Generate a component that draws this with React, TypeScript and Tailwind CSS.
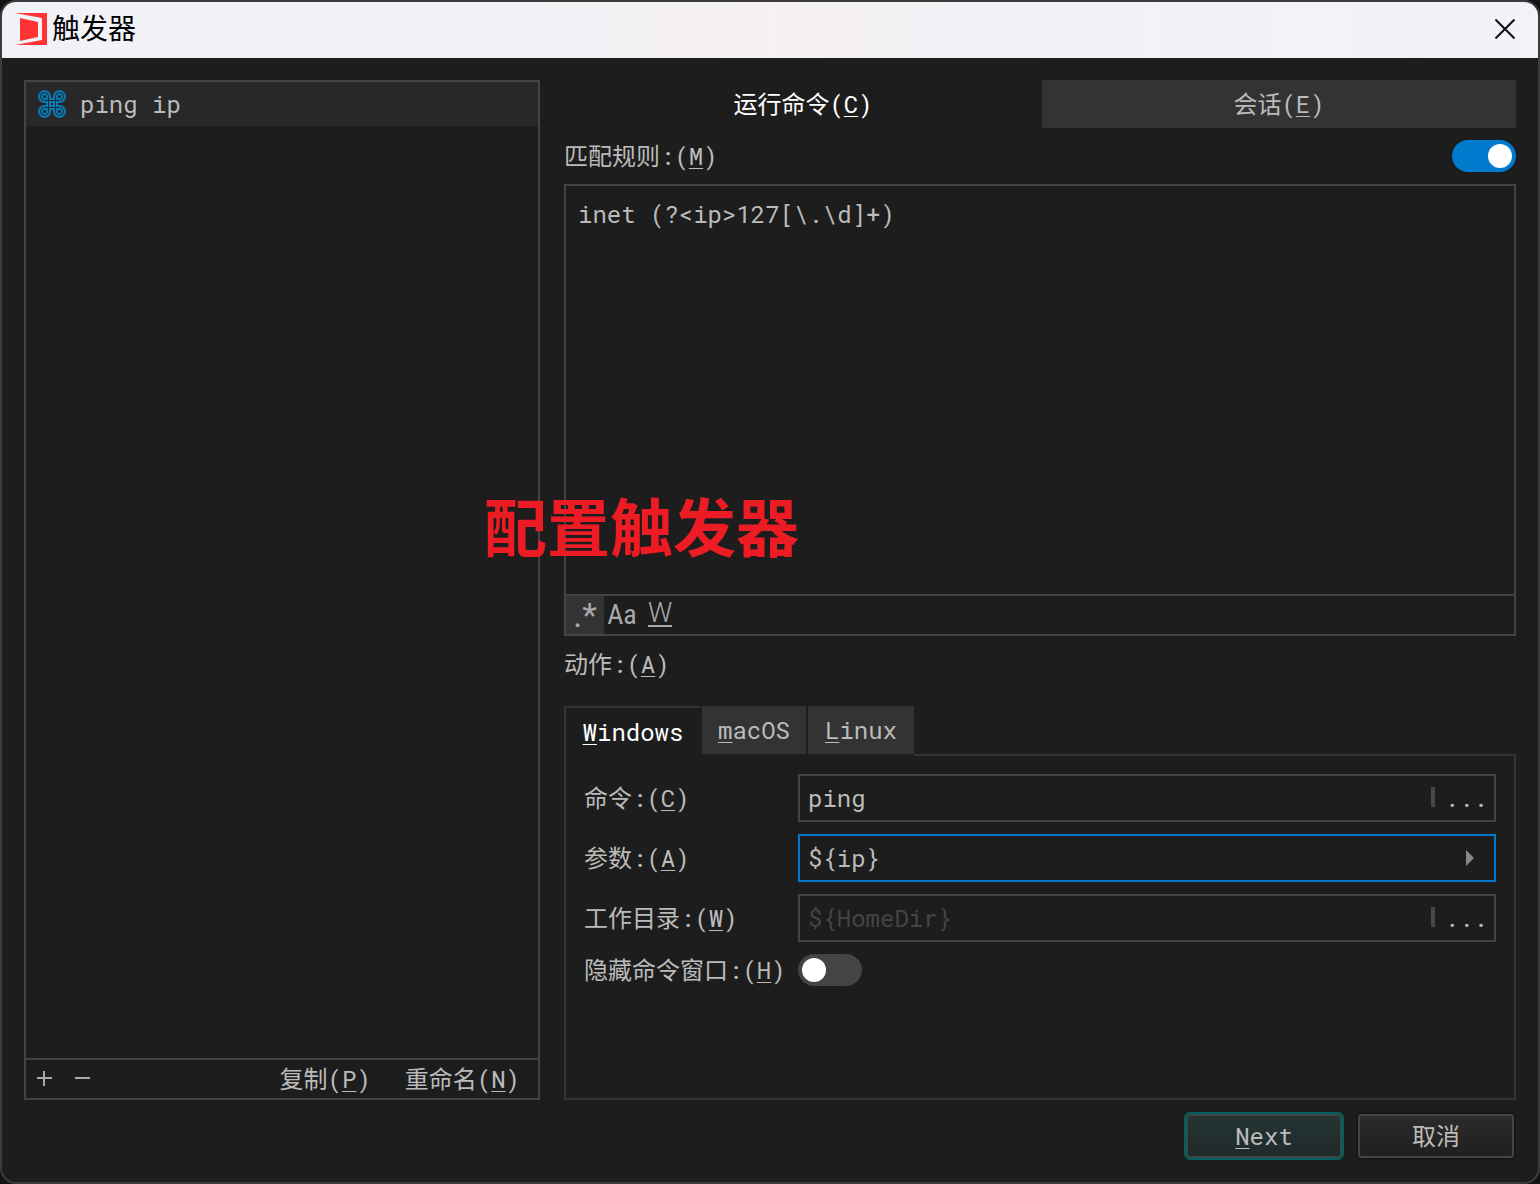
import React, { useState } from "react";
import clsx from "clsx";

const MONO = "font-['Roboto_Mono','Liberation_Mono','Noto_Sans_CJK_SC',monospace]";

const platforms = [
	{ id: "windows", hotkey: "W", rest: "indows", width: "w-[136px]" },
	{ id: "macos", hotkey: "m", rest: "acOS", width: "w-[104px]" },
	{ id: "linux", hotkey: "L", rest: "inux", width: "w-[106px]" },
];

const Hotkey = ({ children }: { children: string }) => (
	<span className="underline decoration-1 underline-offset-3">{children}</span>
);

const Label = ({ text, hotkey, htmlFor }: { text: string; hotkey: string; htmlFor: string }) => (
	<label htmlFor={htmlFor} className="whitespace-nowrap">
		{text}:(<Hotkey>{hotkey}</Hotkey>)
	</label>
);

const Logo = () => (
	<svg width="32" height="32" viewBox="0 0 32 32" aria-hidden="true">
		<path d="M0 0H32V32H0L27 27V5Z" fill="#ff3333" />
		<path d="M5 5L23 9V24L5 28Z" fill="#ff3333" />
	</svg>
);

const LOOPS =
	"M10.500 10.500H6.500A4 4 0 1 1 10.500 6.500V21.500A4 4 0 1 1 6.500 17.500H21.500A4 4 0 1 1 17.500 21.500V6.500A4 4 0 1 1 21.500 10.500Z";

const CommandIcon = () => (
	<svg width="28" height="28" viewBox="0 0 28 28" fill="none" aria-hidden="true">
		<path d={LOOPS} stroke="#047ab8" strokeWidth="5" />
		<path d={LOOPS} stroke="#282828" strokeWidth="1" />
	</svg>
);

const Toggle = ({
	id,
	label,
	checked,
	onChange,
}: {
	id: string;
	label?: string;
	checked: boolean;
	onChange: (value: boolean) => void;
}) => (
	<input
		id={id}
		type="checkbox"
		role="switch"
		aria-label={label}
		checked={checked}
		onChange={(e) => onChange(e.target.checked)}
		className="flex h-8 w-16 shrink-0 appearance-none items-center rounded-full bg-[#444] px-1 before:size-6 before:rounded-full before:bg-white before:content-[''] checked:justify-end checked:bg-[#007acc]"
	/>
);

const BrowseButton = ({ label }: { label: string }) => (
	<>
		<span className="mb-[2px] h-5 w-1 shrink-0 bg-[#484848]" />
		<button type="button" aria-label={label} className="pr-[6px] pl-[10px] leading-8">
			...
		</button>
	</>
);

const fieldBox = "flex h-12 items-center border-2 bg-[#1d1d1d]";
const fieldInput = "min-w-0 flex-1 bg-transparent px-2 outline-none placeholder:text-[#444]";

const TriggerList = () => (
	<aside className="flex w-[516px] shrink-0 flex-col border-2 border-[#444]">
		<ul className="flex-1">
			<li>
				<button type="button" className="flex h-11 w-full items-center gap-[14px] bg-[#282828] px-3">
					<CommandIcon />
					ping ip
				</button>
			</li>
		</ul>
		<div className="flex h-10 items-center border-t-2 border-[#444] pr-[18px] pl-[11px]">
			<button type="button" aria-label="添加" className="pb-[2px]">
				<svg width="15" height="15" viewBox="0 0 15 15" stroke="#aaa" strokeWidth="2">
					<path d="M0 7H15M7 0V15" />
				</svg>
			</button>
			<button type="button" aria-label="删除" className="ml-[23px] pb-[2px]">
				<svg width="15" height="15" viewBox="0 0 15 15" stroke="#aaa" strokeWidth="2">
					<path d="M0 7H15" />
				</svg>
			</button>
			<button type="button" className="ml-auto">
				复制(<Hotkey>P</Hotkey>)
			</button>
			<button type="button" className="ml-[34px]">
				重命名(<Hotkey>N</Hotkey>)
			</button>
		</div>
	</aside>
);

const ActionPanel = () => {
	const [platform, setPlatform] = useState("windows");
	const [hidden, setHidden] = useState(false);

	return (
		<div className="flex flex-1 flex-col">
			<div role="tablist" className="flex h-[50px]">
				{platforms.map(({ id, hotkey, rest, width }) => (
					<button
						key={id}
						type="button"
						role="tab"
						aria-selected={platform === id}
						onClick={() => setPlatform(id)}
						className={clsx(
							"mr-[2px] shrink-0 border-[#333] last-of-type:mr-0",
							width,
							platform === id ? "border-t-2 border-l-2 text-white" : "h-12 bg-[#333]",
						)}
					>
						<Hotkey>{hotkey}</Hotkey>
						{rest}
					</button>
				))}
				<div className="flex-1 border-b-2 border-[#333]" />
			</div>
			<div className="grid flex-1 grid-cols-[202px_1fr] content-start items-center gap-3 border-x-2 border-b-2 border-[#333] p-[18px]">
				<Label text="命令" hotkey="C" htmlFor="command" />
				<div className={clsx(fieldBox, "border-[#444]")}>
					<input id="command" defaultValue="ping" className={fieldInput} />
					<BrowseButton label="选择命令" />
				</div>
				<Label text="参数" hotkey="A" htmlFor="args" />
				<div className={clsx(fieldBox, "border-[#007acc]")}>
					<input id="args" defaultValue="${ip}" className={fieldInput} />
					<button type="button" aria-label="插入变量" className="px-5">
						<svg width="8" height="16" viewBox="0 0 8 16" fill="#888">
							<path d="M0 0L8 8L0 16Z" />
						</svg>
					</button>
				</div>
				<Label text="工作目录" hotkey="W" htmlFor="cwd" />
				<div className={clsx(fieldBox, "border-[#444]")}>
					<input id="cwd" placeholder="${HomeDir}" className={fieldInput} />
					<BrowseButton label="选择工作目录" />
				</div>
				<Label text="隐藏命令窗口" hotkey="H" htmlFor="hide" />
				<Toggle id="hide" checked={hidden} onChange={setHidden} />
			</div>
		</div>
	);
};

const App = () => {
	const [enabled, setEnabled] = useState(true);

	return (
		<div className={clsx("flex min-h-screen flex-col bg-[#141414] text-2xl text-[#bbb]", MONO)}>
			<div className="relative flex flex-1 flex-col overflow-hidden rounded-2xl border-2 border-[#3c3c3c] bg-[#1d1d1d]">
				<header className="flex h-14 items-center bg-linear-to-r from-[#f1f2f7] via-[#f5f1f5] to-[#f1f3f8] pr-[23px] pb-[2px] pl-[13px] text-black">
					<Logo />
					<h1 className="ml-[5px] text-[28px] leading-8">触发器</h1>
					<button type="button" aria-label="关闭" className="ml-auto">
						<svg width="20" height="20" viewBox="0 0 20 20" stroke="#111" strokeWidth="2">
							<path d="M0.500 0.500L19.500 19.500M19.500 0.500L0.500 19.500" />
						</svg>
					</button>
				</header>

				<div className="flex flex-1 gap-6 px-[22px] pt-[22px]">
					<TriggerList />
					<main className="flex min-w-0 flex-1 flex-col">
						<div role="tablist" className="grid h-12 shrink-0 grid-cols-[478fr_474fr]">
							<button type="button" role="tab" aria-selected="true" className="text-white">
								运行命令(<Hotkey>C</Hotkey>)
							</button>
							<button type="button" role="tab" aria-selected="false" className="bg-[#333]">
								会话(<Hotkey>E</Hotkey>)
							</button>
						</div>

						<div className="my-3 flex h-8 items-center justify-between">
							<Label text="匹配规则" hotkey="M" htmlFor="pattern" />
							<Toggle id="enabled" label="启用" checked={enabled} onChange={setEnabled} />
						</div>

						<div className="flex h-[452px] shrink-0 flex-col border-2 border-[#444]">
							<textarea
								id="pattern"
								defaultValue={"inet (?<ip>127[\\.\\d]+)"}
								className="flex-1 resize-none bg-transparent px-3 py-3 outline-none"
							/>
							<div className="flex h-10 border-t-2 border-[#444] font-['Roboto',sans-serif] text-[#aaa]">
								<button
									type="button"
									aria-label="正则表达式"
									className="w-[38px] bg-[#333] text-[34px] leading-9"
								>
									.*
								</button>
								<button
									type="button"
									aria-label="区分大小写"
									className="w-9 font-['Roboto_Condensed','Roboto_Mono',sans-serif] text-[28px] leading-9"
								>
									Aa
								</button>
								<button
									type="button"
									aria-label="全字匹配"
									className="w-10 pb-1 text-[27px] leading-8 font-light underline decoration-2 underline-offset-3"
								>
									W
								</button>
							</div>
						</div>

						<div className="mt-3 mb-[26px] leading-8">
							<Label text="动作" hotkey="A" htmlFor="command" />
						</div>
						<ActionPanel />
					</main>
				</div>

				<footer className="flex justify-end gap-3 px-[22px] pt-3 pb-[22px]">
					<button
						type="button"
						className="h-12 w-40 rounded-md border-2 border-[#005f5f] bg-[#1d1d1d]"
					>
						<span className="flex h-full items-center justify-center rounded-sm border-2 border-[#3d4949] bg-linear-to-b from-[#263434] to-[#1f2a2a]">
							<Hotkey>N</Hotkey>ext
						</span>
					</button>
					<button type="button" className="h-12 w-40 rounded-md border-2 border-[#171717]">
						<span className="flex h-full items-center justify-center rounded-sm border-2 border-[#444] bg-linear-to-b from-[#2b2b2b] to-[#202020]">
							取消
						</span>
					</button>
				</footer>

				<p className="pointer-events-none absolute top-[476px] left-[482px] font-['Noto_Sans_CJK_SC',sans-serif] text-[63px] leading-[92px] font-bold text-[#ed1c24]">
					配置触发器
				</p>
			</div>
		</div>
	);
};

export default App;
